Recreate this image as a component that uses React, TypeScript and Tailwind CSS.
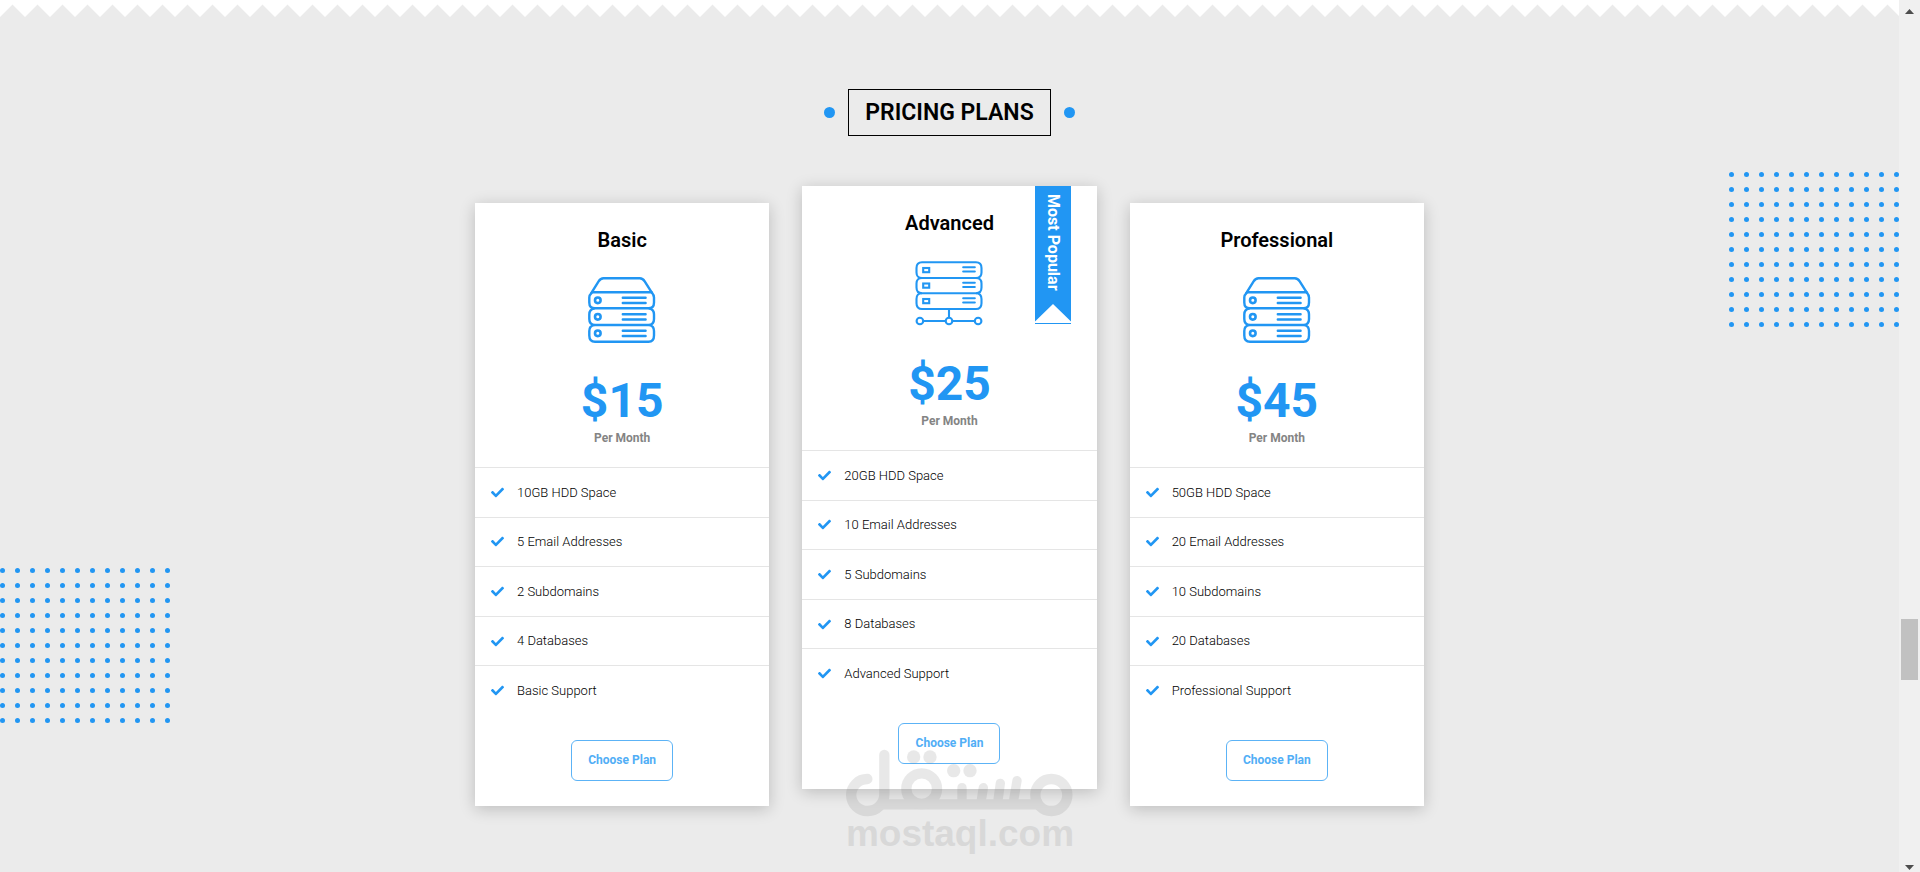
import { FaCheck } from "react-icons/fa";

type Plan = {
  name: string;
  price: string;
  network?: boolean;
  popular?: boolean;
  features: string[];
};

const plans: Plan[] = [
  {
    name: "Basic",
    price: "$15",
    features: ["10GB HDD Space", "5 Email Addresses", "2 Subdomains", "4 Databases", "Basic Support"],
  },
  {
    name: "Advanced",
    price: "$25",
    network: true,
    popular: true,
    features: ["20GB HDD Space", "10 Email Addresses", "5 Subdomains", "8 Databases", "Advanced Support"],
  },
  {
    name: "Professional",
    price: "$45",
    features: ["50GB HDD Space", "20 Email Addresses", "10 Subdomains", "20 Databases", "Professional Support"],
  },
];

function Spikes() {
  return (
    <svg className="block h-[17px] w-full" aria-hidden="true">
      <defs>
        <pattern id="spikes" width="25" height="17" patternUnits="userSpaceOnUse">
          <path d="M0 0H25V17L12.5 4.5L0 17Z" fill="#fff" />
        </pattern>
      </defs>
      <rect width="100%" height="17" fill="url(#spikes)" />
    </svg>
  );
}

function Dots({ id, className }: { id: string; className: string }) {
  return (
    <svg width="170" height="155" className={className} aria-hidden="true">
      <defs>
        <pattern id={id} width="15" height="15" patternUnits="userSpaceOnUse">
          <circle cx="2.5" cy="2.5" r="2.5" fill="#2196f3" />
        </pattern>
      </defs>
      <rect width="170" height="155" fill={`url(#${id})`} />
    </svg>
  );
}

function HostingIcon() {
  return (
    <svg viewBox="0 0 68 68" className="mt-[23px] size-[68px]" fill="none" stroke="#2196f3" strokeWidth="2.4" strokeLinecap="round" aria-hidden="true">
      <path d="M3.4 15.8L10.6 4.4Q12.5 1.3 15.5 1.3H51.8Q54.8 1.3 56.7 4.4L64 15.8" />
      <path d="M4 15.3H63.6Q66 18 66 20.5V25.5Q66 31.3 60.5 31.3H7Q1.3 31.3 1.3 25.5V20.5Q1.3 18 4 15.3" />
      <path d="M6 31.5Q1.3 32.5 1.3 37.5V42Q1.3 48 7 48H60.5Q66 48 66 42V37.5Q66 32.5 61.5 31.5" />
      <path d="M6 48.2Q1.3 49.2 1.3 54V58.5Q1.3 64.7 7 64.7H60.5Q66 64.7 66 58.5V54Q66 49.2 61.5 48.2" />
      {[23.3, 39.8, 56.3].map((y) => (
        <g key={y}>
          <circle cx="9.8" cy={y} r="2.8" strokeWidth="2.6" />
          <path d={`M34.8 ${y - 2.6}H57.6M34.8 ${y + 2.7}H57.6`} />
        </g>
      ))}
    </svg>
  );
}

function NetworkIcon() {
  return (
    <svg viewBox="0 0 68 68" className="mt-[23px] size-[68px]" fill="none" stroke="#2196f3" strokeWidth="2.1" aria-hidden="true">
      <path d="M7 18Q1.5 18 1.5 12.5V8Q1.5 2.3 7 2.3H61Q66.5 2.3 66.5 8V12.5Q66.5 18 61 18Z" />
      <path d="M7 18Q1.5 18 1.5 23.5V27.5Q1.5 33.2 7 33.2H61Q66.5 33.2 66.5 27.5V23.5Q66.5 18 61 18" />
      <path d="M7 33.2Q1.5 33.2 1.5 39V43.2Q1.5 49 7 49H61Q66.5 49 66.5 43.2V39Q66.5 33.2 61 33.2" />
      {[10, 25.5, 41].map((y) => (
        <g key={y}>
          <rect x="8.2" y={y - 2} width="6" height="4.2" />
          <path d={`M48.2 ${y - 2.8}H59.8M48.2 ${y + 1.5}H59.8`} strokeLinecap="round" />
        </g>
      ))}
      <path d="M34 49V57.5M8.3 61H30.5M37.5 61H59.7" />
      <circle cx="4.9" cy="61" r="3.3" />
      <circle cx="34" cy="61" r="3.3" />
      <circle cx="63.1" cy="61" r="3.3" />
    </svg>
  );
}

function Ribbon() {
  return (
    <div className="absolute top-0 right-[26px] w-9">
      <div className="flex h-[118px] w-full items-center bg-[#2196f3] pt-2 text-base leading-9 font-bold text-white [writing-mode:vertical-rl]">
        <span className="w-full">Most Popular</span>
      </div>
      <svg viewBox="0 0 36 21" className="block h-[21px] w-9" fill="#2196f3" aria-hidden="true">
        <path d="M0 0H18L0 17.5ZM18 0H36V17.5Z" />
        <rect y="19" width="36" height="1" />
      </svg>
    </div>
  );
}

function PlanCard({ plan }: { plan: Plan }) {
  return (
    <article
      className={`relative bg-white shadow-[0_3px_15px_rgba(0,0,0,0.2)] ${plan.popular ? "mb-[17px]" : "mt-[17px]"}`}
    >
      {plan.popular && <Ribbon />}
      <div className="flex flex-col items-center pt-[23px] pb-[21px]">
        <h3 className="text-[20px] leading-7 font-semibold text-black">{plan.name}</h3>
        {plan.network ? <NetworkIcon /> : <HostingIcon />}
        <p className="mt-8 text-[48px] leading-[48px] font-bold text-[#2196f3]">{plan.price}</p>
        <p className="mt-[5px] text-[12px] leading-4 font-bold text-[#848484]">Per Month</p>
      </div>
      <ul className="grid h-[248px] auto-rows-fr">
        {plan.features.map((feature) => (
          <li key={feature} className="flex items-center gap-[13px] border-t border-[#e5e5e5] px-4 text-[13px] font-light text-black">
            <FaCheck className="size-[13px] text-[#2196f3]" />
            {feature}
          </li>
        ))}
      </ul>
      <div className="flex justify-center py-[25px]">
        <button type="button" className="h-[41px] w-[102px] rounded-md border border-[#5cb3f6] pb-[2px] text-[12px] font-bold text-[#51aef6]">
          Choose Plan
        </button>
      </div>
    </article>
  );
}

function Watermark() {
  return (
    <div className="pointer-events-none absolute inset-x-0 bottom-[21px] flex flex-col items-center text-[#787878] opacity-[0.16]">
      <svg viewBox="198 328 684 204" className="h-[68px] w-[228px]" fill="none" stroke="currentColor" strokeWidth="31" strokeLinecap="round" aria-hidden="true">
        <path d="M262 418A49 48 0 0 0 263 514A50 50 0 0 0 313 465V346" />
        <path d="M300 494H785" strokeLinecap="butt" />
        <circle cx="425" cy="447" r="46" />
        <circle cx="814" cy="466" r="48" />
        <path d="M546 444V482M610 444L604 482M661 431L654 482M711 423L701 482" strokeWidth="28" />
        <g fill="currentColor" stroke="none">
          <circle cx="401" cy="352" r="20" />
          <circle cx="450" cy="352" r="20" />
          <circle cx="521" cy="393" r="20" />
          <circle cx="570" cy="393" r="20" />
        </g>
      </svg>
      <span className="font-['Liberation_Sans',sans-serif] text-[37px] leading-[34px] font-bold">mostaql.com</span>
    </div>
  );
}

function Scrollbar() {
  return (
    <div className="sticky top-0 flex h-screen w-[21px] shrink-0 flex-col items-center justify-between bg-[#f0f0f0] pt-[9px] pb-[2px]" aria-hidden="true">
      <svg width="9" height="5" fill="#4d4d4d"><path d="M0 5L4.5 0L9 5Z" /></svg>
      <div className="absolute top-[71%] h-[7%] w-[17px] bg-[#c1c1c1]" />
      <svg width="9" height="5" fill="#4d4d4d"><path d="M0 0L4.5 5L9 0Z" /></svg>
    </div>
  );
}

export default function App() {
  return (
    <div className="relative flex min-h-screen bg-[#ebebeb] font-['Roboto',sans-serif]">
      <main className="relative min-w-0 flex-1 overflow-hidden pb-[66px]">
        <Spikes />
        <Dots id="dots-right" className="absolute top-[172px] right-0" />
        <Dots id="dots-left" className="absolute top-[568px] left-0" />

        <div className="mt-[72px] flex items-center justify-center gap-[13px]">
          <span className="size-[11px] rounded-full bg-[#2196f3]" />
          <h2 className="border border-black px-4 text-[23px] leading-[45px] font-semibold text-black">PRICING PLANS</h2>
          <span className="size-[11px] rounded-full bg-[#2196f3]" />
        </div>

        <section className="mx-auto mt-[50px] grid max-w-[949px] gap-[33px] md:grid-cols-3">
          {plans.map((plan) => (
            <PlanCard key={plan.name} plan={plan} />
          ))}
        </section>
      </main>
      <Scrollbar />
      <Watermark />
    </div>
  );
}
